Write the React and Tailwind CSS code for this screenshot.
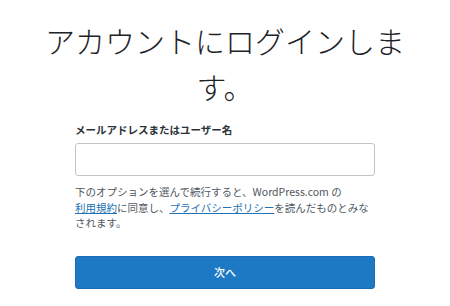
import React from "react";

export default function App() {
  return (
    <div
      className="w-full h-[306px] bg-white flex flex-col items-center overflow-hidden"
      style={{ fontFamily: '"Noto Sans CJK JP", "Noto Sans", sans-serif' }}
    >
      {/* Title */}
      <h1 className="w-[380px] pt-[17px] text-center text-[30px] leading-[46px] font-light text-[#1d2327]">
        アカウントにログインします。
      </h1>

      {/* Form */}
      <div className="w-[300px] mt-[13px] flex flex-col">
        <label className="text-[10.5px] leading-[16px] font-bold text-[#2c3338]">
          メールアドレスまたはユーザー名
        </label>
        <input
          type="text"
          className="mt-[5px] h-[33px] w-full rounded-[3px] border border-[#c3c4c7] bg-white px-2 outline-none"
        />
        <p className="mt-[8px] text-[10.5px] leading-[15.5px] text-[#50575e]">
          下のオプションを選んで続行すると、WordPress.com の
          <br />
          <a href="#" className="text-[#2271b1] underline">
            利用規約
          </a>
          に同意し、
          <a href="#" className="text-[#2271b1] underline">
            プライバシーポリシー
          </a>
          を読んだものとみな
          <br />
          されます。
        </p>
        <button className="mt-[25px] h-[33px] w-full rounded-[3px] border border-[#1a6db3] bg-[#1d79c4] text-[11px] font-medium text-white">
          次へ
        </button>
      </div>
    </div>
  );
}
